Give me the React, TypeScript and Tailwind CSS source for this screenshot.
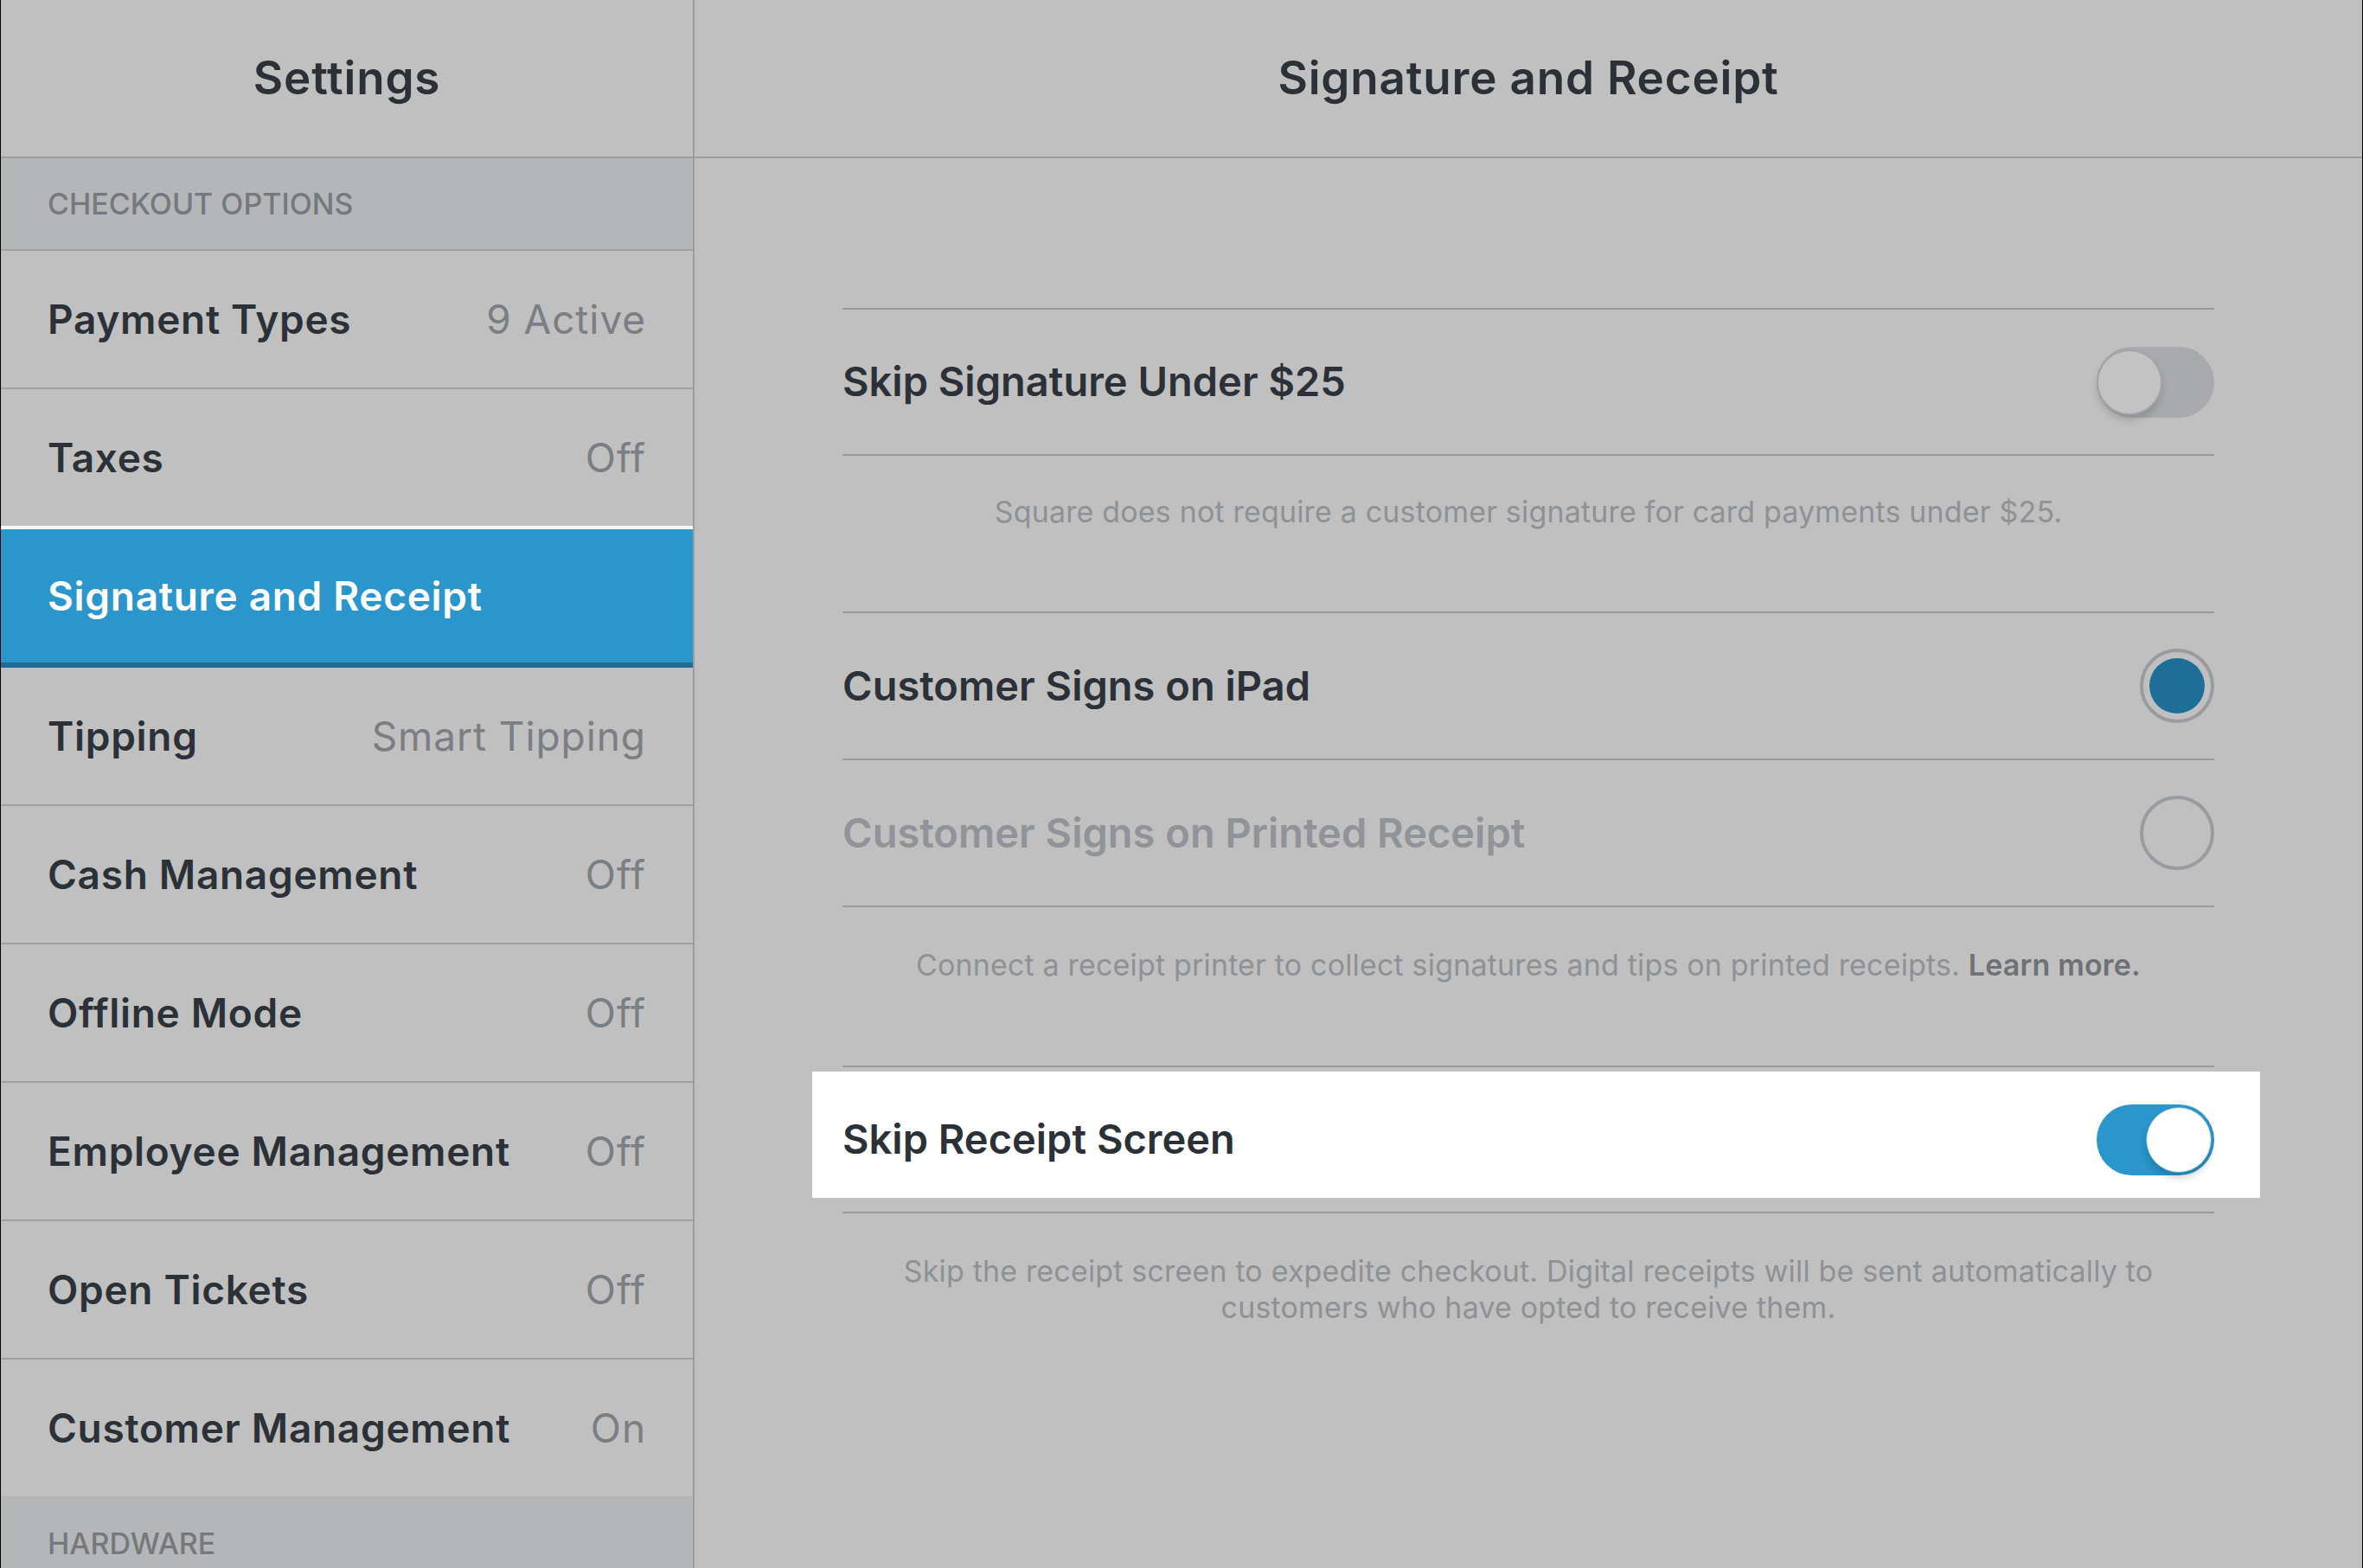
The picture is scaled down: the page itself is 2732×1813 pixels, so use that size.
import React from "react"

const font = { fontFamily: "Inter, 'Noto Sans', sans-serif" }

const items = [
  { label: "Payment Types", value: "9 Active" },
  { label: "Taxes", value: "Off", noBorder: true },
  { label: "Signature and Receipt", value: "", active: true },
  { label: "Tipping", value: "Smart Tipping" },
  { label: "Cash Management", value: "Off" },
  { label: "Offline Mode", value: "Off" },
  { label: "Employee Management", value: "Off" },
  { label: "Open Tickets", value: "Off" },
  { label: "Customer Management", value: "On", noBorder: true },
]

function SideRow({ label, value, active, noBorder }: { label: string; value: string; active?: boolean; noBorder?: boolean }) {
  if (active) {
    return (
      <div className="h-[164px] shrink-0 flex items-center px-[54px] bg-[#2a96cb] border-t-4 border-white border-b-[6px] border-b-[#1f6b94]">
        <span className="text-[46px] font-semibold tracking-[0.015em] text-white">{label}</span>
      </div>
    )
  }
  return (
    <div
      className={
        noBorder
          ? "h-[158px] shrink-0 flex items-center justify-between px-[54px]"
          : "h-[160px] shrink-0 flex items-center justify-between px-[54px] border-b-2 border-[#9fa1a4]"
      }
    >
      <span className="text-[46px] font-semibold tracking-[0.015em] text-[#2b3137]">{label}</span>
      <span className="text-[46px] font-normal tracking-[0.02em] text-[#7b7e82]">{value}</span>
    </div>
  )
}

function Toggle({ on }: { on?: boolean }) {
  if (on) {
    return (
      <div className="relative w-[136px] h-[82px] rounded-full bg-[#2a96cb] shrink-0">
        <div className="absolute right-[3px] top-[3px] w-[76px] h-[76px] rounded-full bg-white border border-[#5aaed8] shadow-[0_6px_8px_rgba(0,0,0,0.18)]" />
      </div>
    )
  }
  return (
    <div className="relative w-[136px] h-[82px] rounded-full bg-[#a9aaae] shrink-0">
      <div className="absolute left-0 top-[3px] w-[76px] h-[76px] rounded-full bg-[#c3c3c3] border-2 border-[#a2a3a6] shadow-[0_6px_8px_rgba(0,0,0,0.15)]" />
    </div>
  )
}

function Radio({ checked }: { checked?: boolean }) {
  return (
    <div className="w-[86px] h-[86px] rounded-full border-4 border-[#989b9f] flex items-center justify-center shrink-0">
      {checked && <div className="w-[64px] h-[64px] rounded-full bg-[#1f6e98]" />}
    </div>
  )
}

export default function App() {
  return (
    <div style={font} className="flex w-[2732px] h-[1813px] overflow-hidden bg-[#c0c0c0] border-x border-black">
      <div className="w-[802px] shrink-0 flex flex-col border-r-2 border-[#9a9c9f]">
        <div className="h-[183px] shrink-0 flex items-center justify-center border-b-2 border-[#9a9c9f]">
          <h1 className="text-[53px] font-semibold tracking-[0.015em] text-[#2b3137]">Settings</h1>
        </div>
        <div className="h-[107px] shrink-0 flex items-center px-[54px] bg-[#b5b6b8] border-b-2 border-[#9fa1a4]">
          <span className="text-[34px] font-medium uppercase text-[#75797d]">Checkout Options</span>
        </div>
        {items.map((it) => (
          <SideRow key={it.label} {...it} />
        ))}
        <div className="h-[108px] shrink-0 flex items-center px-[54px] bg-[#b5b6b8]">
          <span className="text-[34px] font-medium uppercase text-[#75797d]">Hardware</span>
        </div>
      </div>

      <div className="flex-1 flex flex-col">
        <div className="h-[183px] shrink-0 flex items-center justify-center border-b-2 border-[#9a9c9f]">
          <h1 className="text-[53px] font-semibold tracking-[0.015em] text-[#2b3137]">Signature and Receipt</h1>
        </div>

        <div className="px-[171px] pt-[173px] flex flex-col">
          <div className="h-[171px] flex items-center justify-between border-y-2 border-[#999c9f]">
            <span className="text-[47px] font-semibold text-[#2b3137]">Skip Signature Under $25</span>
            <Toggle />
          </div>
          <div className="h-[180px] pt-[44px] text-center">
            <p className="text-[34px] leading-[42px] tracking-[0.005em] text-[#8e9195]">
              Square does not require a customer signature for card payments under $25.
            </p>
          </div>

          <div className="h-[170px] flex items-center justify-between border-t-2 border-[#999c9f]">
            <span className="text-[47px] font-semibold text-[#2b3137]">Customer Signs on iPad</span>
            <Radio checked />
          </div>
          <div className="h-[172px] flex items-center justify-between border-y-2 border-[#999c9f]">
            <span className="text-[47px] font-semibold text-[#909397]">Customer Signs on Printed Receipt</span>
            <Radio />
          </div>
          <div className="h-[183px] pt-[46px] text-center">
            <p className="text-[34px] leading-[42px] tracking-[0.005em] text-[#8e9195]">
              Connect a receipt printer to collect signatures and tips on printed receipts.{" "}
              <span className="font-semibold text-[#6e7175]">Learn more.</span>
            </p>
          </div>

          <div className="relative h-[171px] border-y-2 border-[#999c9f]">
            <div className="absolute -left-[35px] -right-[53px] top-[5px] bottom-[16px] bg-white" />
            <div className="relative h-full flex items-center justify-between">
              <span className="text-[47px] font-semibold text-[#2b3137]">Skip Receipt Screen</span>
              <Toggle on />
            </div>
          </div>
          <div className="pt-[46px] text-center">
            <p className="text-[34px] leading-[42px] tracking-[0.005em] text-[#8e9195]">
              Skip the receipt screen to expedite checkout. Digital receipts will be sent automatically to
              <br />
              customers who have opted to receive them.
            </p>
          </div>
        </div>
      </div>
    </div>
  )
}
